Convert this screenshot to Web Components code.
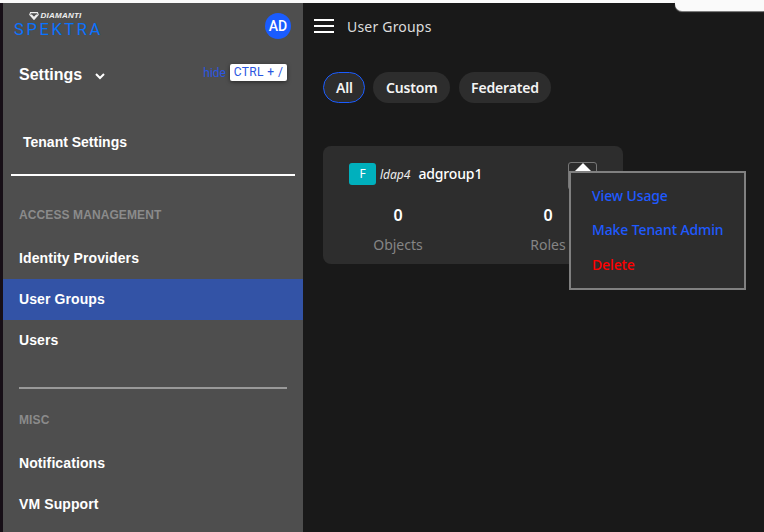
<!DOCTYPE html>
<html>
<head>
<meta charset="utf-8">
<title>User Groups</title>
<style>
  html, body { margin: 0; height: 100%; background: #191919; overflow: hidden; }
</style>
</head>
<body>
<app-shell>
  <side-nav slot="side"></side-nav>
  <top-bar slot="main" title="User Groups"></top-bar>
  <filter-pills slot="main"></filter-pills>
  <group-card slot="main" kind="F" source="ldap4" name="adgroup1"></group-card>
</app-shell>

<script>
class AppShell extends HTMLElement {
  constructor() {
    super();
    this.attachShadow({ mode: "open" });
    this.shadowRoot.innerHTML = /*html*/ `
      <style>
        :host { display: flex; flex-direction: column; width: 764px; height: 532px; overflow: hidden; position: relative; background: #191919; }
        .strip { height: 3px; background: #fafafa; flex: none; }
        .body { display: flex; flex: 1; min-height: 0; }
        .edge { width: 3px; background: #170f17; flex: none; }
        .main { flex: 1; min-width: 0; display: flex; flex-direction: column; }
        .corner {
          position: absolute; top: 0; right: 0; width: 89px; height: 11px;
          background: #fafafa; border-bottom-left-radius: 7px; box-shadow: 0 1px 1px #888;
        }
      </style>
      <div class="strip"></div>
      <div class="body">
        <div class="edge"></div>
        <slot name="side"></slot>
        <div class="main"><slot name="main"></slot></div>
      </div>
      <div class="corner"></div>
    `;
  }
}

class SideNav extends HTMLElement {
  constructor() {
    super();
    this.attachShadow({ mode: "open" });
    this.shadowRoot.innerHTML = /*html*/ `
      <style>
        :host { display: block; width: 300px; flex: none; background: #4e4e4e; color: #fff; font: bold 14px "Liberation Sans", Arial, sans-serif; overflow: hidden; }
        .brand { display: flex; justify-content: space-between; align-items: center; height: 44px; padding: 1px 12px 0 10px; }
        .logo { width: 90px; margin-top: -3px; }
        .diamanti { display: flex; align-items: center; justify-content: center; gap: 1px; height: 9px; padding-right: 5px; font: italic bold 8px "Liberation Sans", Arial, sans-serif; letter-spacing: .25px; color: #eee; }
        .spektra { font: 400 16.5px/17px Roboto, sans-serif; letter-spacing: 2.6px; color: #0a72ff; margin: 1px 0 0 1px; white-space: nowrap; }
        .avatar { width: 26px; height: 26px; border-radius: 50%; background: #1a5cff; font: 500 14px/26px Roboto, sans-serif; text-align: center; }
        .settings { display: flex; align-items: center; height: 30px; margin-top: 12px; padding: 0 16px; }
        .settings b { font-size: 16px; }
        .settings svg { margin-left: 13px; margin-top: 2px; }
        .hide { margin-left: auto; font: 400 12px Roboto, sans-serif; color: #2a56e0; margin-top: -5px; }
        kbd { margin-left: 4px; margin-top: -5px; width: 57px; height: 17px; box-sizing: border-box; background: #fff; border-radius: 2px; box-shadow: 0 1px 4px rgba(0,0,0,.5); font: 400 12px/17px Roboto, sans-serif; letter-spacing: .4px; color: #2a56e0; text-align: center; }
        .tenant { height: 41px; line-height: 41px; margin-top: 32px; padding-left: 20px; }
        hr { border: 0; height: 2px; margin: 0; }
        .white { background: #fff; margin: 11px 8px 0; }
        .grey { background: #999; margin: 26px 16px 0; }
        h4 { margin: 0; padding-left: 16px; font: bold 12px/14px "Liberation Sans", Arial, sans-serif; letter-spacing: .1px; color: #8b8b8b; }
        .access { margin-top: 32px; margin-bottom: 16px; }
        .misc { margin-top: 24px; margin-bottom: 16px; }
        a { display: block; height: 41px; line-height: 41px; padding-left: 16px; letter-spacing: .1px; }
        a.on { background: #3353a6; }
      </style>
      <div class="brand">
        <div class="logo">
          <div class="diamanti">
            <svg width="10" height="8" viewBox="0 0 8 7"><path d="M1 .5h6l.7 1.8L4 6.5.3 2.3zM1.6 2.2 4 5l2.4-2.8" fill="none" stroke="#eee" stroke-width="1"/></svg>
            <span>DIAMANTI</span>
          </div>
          <div class="spektra">SPEKTRA</div>
        </div>
        <div class="avatar">AD</div>
      </div>
      <div class="settings">
        <b>Settings</b>
        <svg width="10" height="7" viewBox="0 0 10 7"><path d="M1 1l4 4 4-4" fill="none" stroke="#fff" stroke-width="2"/></svg>
        <span class="hide">hide</span>
        <kbd>CTRL + /</kbd>
      </div>
      <div class="tenant">Tenant Settings</div>
      <hr class="white">
      <h4 class="access">ACCESS MANAGEMENT</h4>
      <a>Identity Providers</a>
      <a class="on">User Groups</a>
      <a>Users</a>
      <hr class="grey">
      <h4 class="misc">MISC</h4>
      <a>Notifications</a>
      <a>VM Support</a>
    `;
  }
}

class TopBar extends HTMLElement {
  constructor() {
    super();
    this.attachShadow({ mode: "open" });
    this.shadowRoot.innerHTML = /*html*/ `
      <style>
        :host { display: flex; align-items: center; height: 46px; padding-left: 11px; gap: 13px; color: #dcdcdc; font: 400 14px "Noto Sans", sans-serif; letter-spacing: .2px; }
        .burger { display: flex; flex-direction: column; gap: 4px; width: 20px; }
        .burger i { height: 2px; background: #fff; display: block; }
      </style>
      <div class="burger"><i></i><i></i><i></i></div>
      <span id="t"></span>
    `;
  }

  connectedCallback() {
    this.shadowRoot.querySelector("#t").textContent = this.getAttribute("title");
  }
}

class FilterPills extends HTMLElement {
  constructor() {
    super();
    this.attachShadow({ mode: "open" });
    this.shadowRoot.innerHTML = /*html*/ `
      <style>
        :host { display: flex; gap: 8.5px; margin: 23px 0 0 20px; font: 600 14px "Noto Sans", sans-serif; letter-spacing: -.15px; color: #f4f4f4; }
        span { height: 31px; line-height: 31px; padding: 0 12.5px; border-radius: 16px; background: #2d2d2d; box-sizing: border-box; }
        .on { border: 1px solid #1a5cff; line-height: 29px; padding: 0 11px 0 12px; }
      </style>
      <span class="on">All</span><span>Custom</span><span>Federated</span>
    `;
  }
}

class GroupCard extends HTMLElement {
  constructor() {
    super();
    this.attachShadow({ mode: "open" });
    this.shadowRoot.innerHTML = /*html*/ `
      <style>
        :host { display: block; position: relative; width: 300px; height: 118px; margin: 43px 0 0 20px; background: #2d2d2d; border-radius: 8px; font-family: "Noto Sans", sans-serif; color: #fff; }
        .head { display: flex; align-items: center; padding: 17px 26px 0; height: 22px; }
        .badge { width: 27px; height: 22px; background: #00b0bd; border-radius: 3px; font: 400 12px/22px "Noto Sans", sans-serif; text-align: center; }
        .src { margin-left: 4px; font: italic 400 12px "Noto Sans", sans-serif; color: #eee; }
        .name { margin-left: 8px; margin-top: -1px; font-size: 14px; font-weight: 500; letter-spacing: -.15px; }
        .toggle { position: absolute; left: 245px; top: 16px; width: 29px; height: 28px; box-sizing: border-box; border: 1px solid #777; border-radius: 3px; }
        .toggle::before { content: ""; position: absolute; left: 6px; top: 0; border: 8px solid transparent; border-top: 0; border-bottom: 8px solid #fff; }
        .stats { display: grid; grid-template-columns: 1fr 1fr; text-align: center; margin-top: 19px; }
        .num { font-size: 16px; font-weight: 600; line-height: 22px; }
        .label { font-size: 14px; line-height: 20px; color: #858585; margin-top: 9px; }
        .menu { position: absolute; left: 246px; top: 25px; width: 177px; height: 119px; box-sizing: border-box; border: 2px solid #808080; background: #2d2d2d; padding: 5.8px 0 0 21px; font-size: 14px; font-weight: 500; letter-spacing: -.12px; }
        .menu div { height: 34.6px; line-height: 34.6px; color: #1f5aff; white-space: nowrap; }
        .menu .del { color: #ff0000; }
      </style>
      <div class="head">
        <div class="badge" id="kind"></div>
        <span class="src" id="src"></span>
        <span class="name" id="name"></span>
      </div>
      <div class="toggle"></div>
      <div class="stats">
        <div><div class="num">0</div><div class="label">Objects</div></div>
        <div><div class="num">0</div><div class="label">Roles</div></div>
      </div>
      <div class="menu">
        <div>View Usage</div>
        <div>Make Tenant Admin</div>
        <div class="del">Delete</div>
      </div>
    `;
  }

  connectedCallback() {
    this.shadowRoot.querySelector("#kind").textContent = this.getAttribute("kind");
    this.shadowRoot.querySelector("#src").textContent = this.getAttribute("source");
    this.shadowRoot.querySelector("#name").textContent = this.getAttribute("name");
  }
}

customElements.define("app-shell", AppShell);
customElements.define("side-nav", SideNav);
customElements.define("top-bar", TopBar);
customElements.define("filter-pills", FilterPills);
customElements.define("group-card", GroupCard);
</script>
</body>
</html>
